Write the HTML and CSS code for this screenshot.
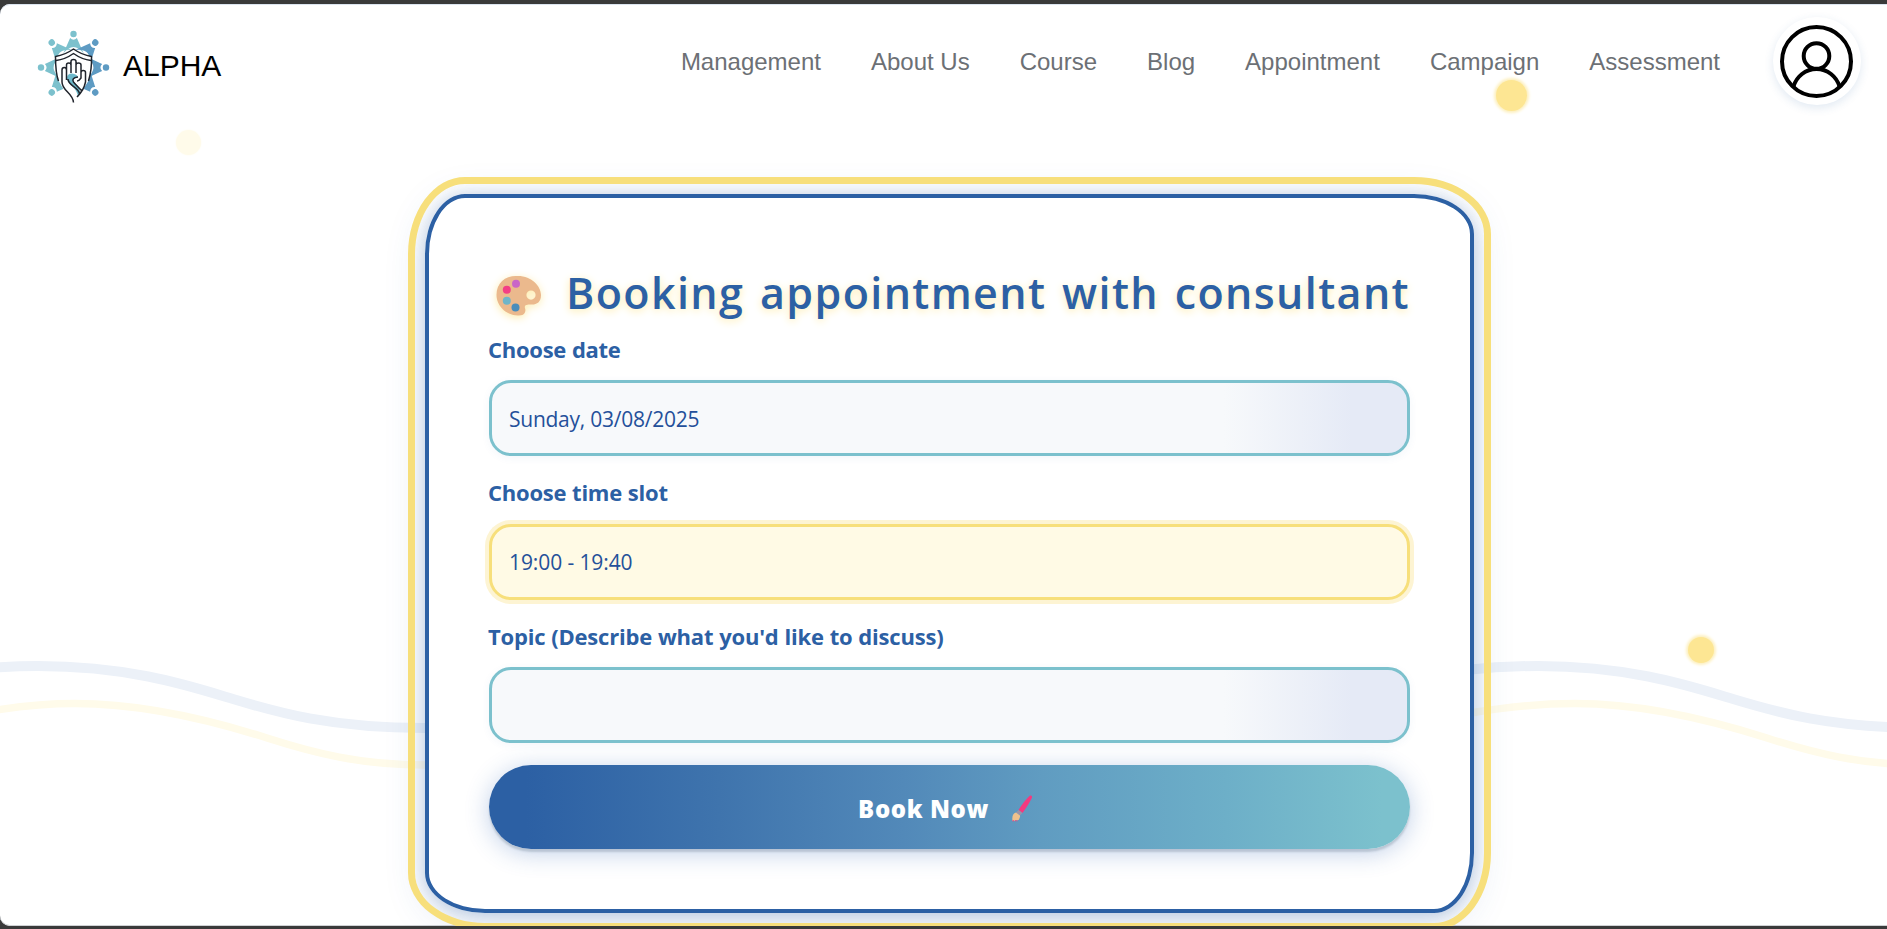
FILE: index.html
```html
<!DOCTYPE html>
<html lang="en">
<head>
<meta charset="utf-8">
<title>ALPHA</title>
<link rel="stylesheet" href="styles.css">
</head>
<body>
<div class="window">
  <svg class="waves" viewBox="0 0 1887 922" fill="none">
    <path class="wave-blue" d="M-10 664Q14 662 38 662C130 662 190 682 233 695S330 724 425 724"/>
    <path class="wave-yellow" d="M-10 707Q36 699.500 75 699.500C150 699.500 220 719 267 734S360 761 425 761"/>
    <path class="wave-blue" d="M1465 666Q1502 662 1538 662C1630 662 1690 682 1733 695S1830 724 1925 724"/>
    <path class="wave-yellow" d="M1465 710Q1525 699.500 1575 699.500C1650 699.500 1720 719 1767 734S1860 761 1925 761"/>
  </svg>

  <header class="header">
    <a class="brand">
      <svg class="logo" viewBox="0 0 84 84">
        <defs>
          <g id="person"><circle cx="0" cy="-33.500" r="3.300"/><path d="M-3.500-29.500Q0-26 3.500-29.500L10.500-14Q0-27-10.500-14Z"/></g>
        </defs>
        <g transform="translate(41.500 43.500) scale(.97 1)">
          <g fill="#7cc1cd">
            <use href="#person"/>
            <use href="#person" transform="rotate(-42)"/>
            <use href="#person" transform="rotate(-90)"/>
            <use href="#person" transform="rotate(-138)"/>
          </g>
          <g fill="#5e9bc3">
            <use href="#person" transform="rotate(42)"/>
            <use href="#person" transform="rotate(90)"/>
            <use href="#person" transform="rotate(138)"/>
          </g>
        </g>
        <path d="M24 33L41.500 26L59 33V44Q58 58 50 66L41.500 76L32 66Q24 54 24 44Z" fill="#fff"/>
        <path d="M35 54Q35 49.500 40 49.500Q45 50 46 53Q40 54 42 58Q49 64 48 70L46 73Q45 66 39 61Q35 58 35 54Z" fill="#6db9cb"/>
        <g fill="none" stroke="#20242c" stroke-width="1.500" stroke-linejoin="round">
          <path d="M26.500 57Q23.500 49 23.500 32.500Q33 31 41.500 25Q50 31 59.500 32.500Q60 45 56.500 57"/>
          <path d="M24 36.500Q33 35.500 41.500 29.500Q50 35.500 59 36.500"/>
          <path d="M41.500 78.500C41 69 30 67 30 58V46Q30 43.500 32.300 43.500Q34.500 43.500 34.500 46V56M34.500 50V41Q34.500 39 36.700 39Q39 39 39 41V49M39 48V37.500Q39 35.500 41.500 35.500Q44 35.500 44 37.500V49M44 48V41Q44 39 46.500 39Q49 39 49 41V54Q47 57 45 57M49 54V48.500Q49 46.500 51.300 46.500Q53.500 46.500 53.500 48.500V58Q52 66 45 73M36 55C36 62 47 63 47.500 70M46 53Q39 54 41.500 58Q44 61 50 67"/>
        </g>
      </svg>
      <span class="brand-name">ALPHA</span>
    </a>
    <nav class="nav">
      <a>Management</a><a>About Us</a><a>Course</a><a>Blog</a><a>Appointment</a><a>Campaign</a><a>Assessment</a>
    </nav>
    <div class="avatar">
      <svg viewBox="0 0 74 74" fill="none" stroke="#000" stroke-width="4">
        <circle cx="36.500" cy="37.500" r="34.500"/>
        <circle cx="36.500" cy="32" r="12.800"/>
        <path d="M13.500 62.500C16.500 52.500 25.500 45 36.500 45S56.500 52.500 59.500 62.500"/>
      </svg>
    </div>
  </header>

  <main class="card">
    <h1 class="title">
      <svg class="palette" viewBox="0 0 46 42">
        <path fill="#ebb98d" fill-rule="evenodd" d="M20 1C35 0 45 11 45 20C45 27 41 29.500 36 29.500C31 29 28 30 29 33C30.500 37 28 41 22 40.500C9 40 .5 30 .5 20C.5 8 9 1 20 1ZM35 15.500A4.600 4.600 0 1 0 35 24.700A4.600 4.600 0 1 0 35 15.500Z"/>
        <circle cx="20" cy="8.700" r="4" fill="#c966c8"/><circle cx="10.800" cy="14.700" r="4" fill="#f33f86"/>
        <circle cx="10.800" cy="25.700" r="4" fill="#6fb5c9"/><circle cx="19.500" cy="32.500" r="4" fill="#4a8dbb"/>
      </svg>
      <span class="title-text">Booking appointment with consultant</span>
    </h1>
    <form class="form">
      <div class="field">
        <label class="label-date">Choose date</label>
        <div class="input input-date"><span>Sunday, 03/08/2025</span></div>
      </div>
      <div class="field">
        <label class="label-time">Choose time slot</label>
        <div class="input focused"><span>19:00 - 19:40</span></div>
      </div>
      <div class="field">
        <label>Topic (Describe what you'd like to discuss)</label>
        <div class="input"></div>
      </div>
      <button type="button" class="submit">
        <span>Book Now</span>
        <svg class="brush" viewBox="0 0 22 27">
          <path fill="#f4397f" d="M19 .5Q21.500 0 21 2.500Q18 9 11.500 18L7.500 15Q13 6 19 .5Z"/>
          <path fill="#9a93a8" d="M7.500 15L11.500 18L9 20.500L5 17.500Z"/>
          <path fill="#efc18c" d="M5 17.500L9 20.500Q9.500 26 1.500 26Q.5 18.500 5 17.500Z"/>
          <path stroke="#f4397f" stroke-dasharray="1.500 1" d="M1.500 25.800H7"/>
        </svg>
      </button>
    </form>
  </main>

  <i class="dot dot-a"></i><i class="dot dot-b"></i><i class="dot dot-c"></i>
</div>
</body>
</html>
```
FILE: styles.css
```css
* { box-sizing: border-box; }
body {
  margin: 0;
  height: 929px;
  padding: 4px 0 3px;
  background: #3a3a3a;
  overflow: hidden;
}
.window {
  position: relative;
  height: 922px;
  overflow: hidden;
  background: #fff;
  border-radius: 10px 0 0 10px;
  box-shadow: inset 0 1px #dce5f0, inset 0 -1px #cfd2d4;
  font-family: "Open Sans", "Noto Sans", sans-serif;
}
.waves { position: absolute; inset: 0; width: 1887px; height: 922px; }
.wave-blue { stroke: #ecf1f8; stroke-width: 10; }
.wave-yellow { stroke: #fffbea; stroke-width: 7.5; }

.header {
  position: relative;
  display: flex;
  align-items: flex-start;
  height: 190px;
  padding: 13px 26px 0 32px;
  font-family: "Liberation Sans", Arial, sans-serif;
}
.brand { display: flex; padding-top: 7px; gap: 7px; }
.logo { width: 84px; height: 84px; }
.brand-name { font-size: 30px; line-height: 34px; padding-top: 25px; color: #000; }
.nav {
  display: flex;
  gap: 50px;
  margin-left: auto;
  margin-right: 53px;
  padding-top: 31px;
  font-size: 24px;
  line-height: 28px;
  color: #6c7075;
}
.avatar {
  width: 88px;
  height: 88px;
  padding: 7px;
  border-radius: 50%;
  background: #fff;
  box-shadow: 0 3px 10px rgba(44, 96, 164, .14);
}
.avatar svg { display: block; width: 74px; height: 74px; }

.card {
  position: relative;
  width: 1049px;
  height: 719px;
  margin-left: 425px;
  padding: 64px 60px 0;
  background: rgba(255, 255, 255, .99);
  border: 4px solid #2c60a4;
  border-radius: 40px 60px 40px 60px / 60px 40px 60px 40px;
  outline: 7px solid #f7df7b;
  outline-offset: 10px;
  box-shadow: 0 8px 40px rgba(44, 96, 164, .18), 0 2px 16px rgba(44, 96, 164, .24);
}
.title {
  display: flex;
  align-items: flex-start;
  height: 72px;
  margin: 0;
  padding-left: 7px;
  color: #2c60a4;
  font-size: 43px;
  line-height: 62px;
  font-weight: 600;
  white-space: nowrap;
}
.palette { width: 46px; height: 42px; margin: 13px 24px 0 0; overflow: visible; filter: drop-shadow(0 2px 4px #fdecab); }
.title-text { letter-spacing: 1.38px; word-spacing: 3.2px; text-shadow: 0 2px 8px #fdecab; }
.form { display: flex; flex-direction: column; }
.field { display: flex; flex-direction: column; gap: 16px; height: 122px; margin-bottom: 22px; }
.field:nth-child(2) { margin-bottom: 21px; }
.field label {
  margin-left: -1px;
  font-size: 22px;
  line-height: 30px;
  font-weight: 700;
  letter-spacing: -.2px;
  word-spacing: .4px;
  color: #2c60a4;
  white-space: nowrap;
}
.field .label-date { letter-spacing: -.27px; }
.field .label-time { line-height: 28px; margin-bottom: 2px; letter-spacing: -.24px; }
.input {
  height: 76px;
  padding: 20px 17px;
  border: 3px solid #7cc1cd;
  border-radius: 22px;
  background: linear-gradient(90deg, #f7f9fb 80%, #e5eaf6 94%);
  box-shadow: 0 2px 8px rgba(44, 96, 164, .06);
  color: #24509a;
  font-size: 21px;
  line-height: 30px;
  white-space: nowrap;
}
.input-date { padding-top: 21px; letter-spacing: -.25px; }
.input.focused {
  border-color: #f7df7b;
  background: #fffae5;
  box-shadow: 0 0 0 4px #fdf4d3;
  letter-spacing: -.1px;
}
.submit {
  display: flex;
  align-items: center;
  justify-content: center;
  gap: 22px;
  height: 84px;
  padding: 3px 8px 0 0;
  border: 0;
  border-radius: 42px;
  background: linear-gradient(90deg, #2c60a4 4%, #3f74ad 25%, #5289b9 45%, #609cc1 60%, #6dafc8 80%, #7cc1cd 97%);
  box-shadow: 0 4px 24px rgba(44, 96, 180, .3), 0 3px 2px #d8dbdc;
  color: #fff;
  font: 800 24px/32px "Open Sans", sans-serif;
  letter-spacing: .6px;
}
.brush { width: 22px; height: 27px; }

.dot { position: absolute; border-radius: 50%; background: #fde693; box-shadow: 0 0 3px 2px #fdf0bf; }
.dot-a { left: 1496px; top: 76px; width: 31px; height: 31px; }
.dot-b { left: 1688px; top: 633px; width: 26px; height: 26px; }
.dot-c { left: 176px; top: 126px; width: 25px; height: 25px; background: #fffbea; box-shadow: 0 0 2px #fffbea; }
```
